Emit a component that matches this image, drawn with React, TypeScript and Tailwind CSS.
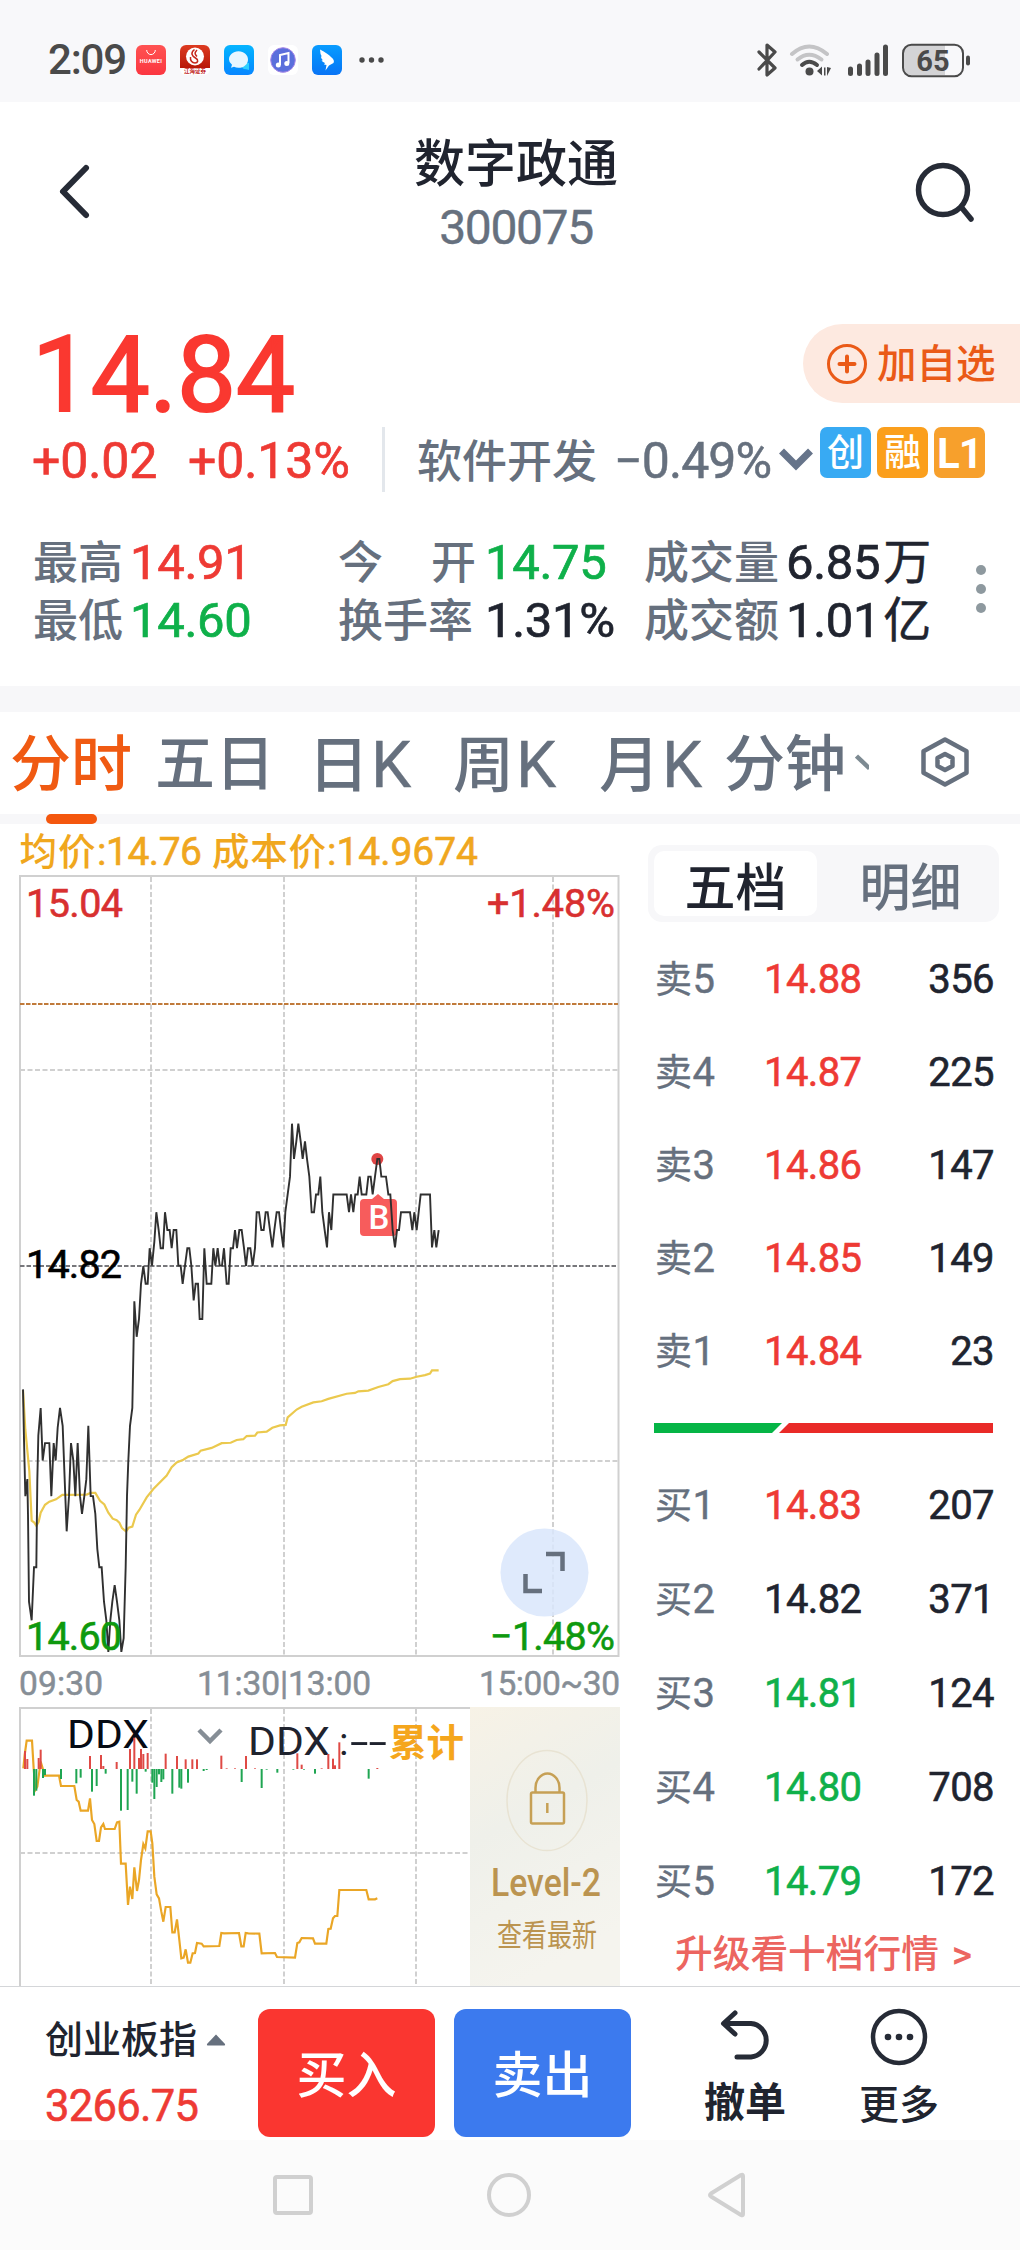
import React from "react";

const PRICE_LINE =
  "69,833 72,960 76,1103 82,1060 84,1150 87,1370 95,1417 102,1283 109,1283 112,1060 115,950 122,880 128,1013 135,969 148,969 154,1103 161,969 167,1013 173,930 180,880 188,925 194,1060 200,1192 207,1103 213,969 220,1013 226,1103 233,969 240,1103 246,1148 253,1103 259,1060 265,925 272,1103 279,1103 286,1148 292,1237 298,1283 305,1283 312,1370 319,1417 325,1497 331,1417 337,1370 344,1328 351,1370 358,1417 364,1497 371,1462 377,1283 381,1103 385,1013 390,925 397,880 400,750 403,610 410,700 417,655 423,566 430,521 437,566 443,566 449,476 456,520 463,460 469,385 476,430 482,476 489,476 495,385 502,430 509,430 515,476 521,430 529,430 535,520 542,520 548,566 555,520 562,476 568,476 574,520 581,608 587,566 594,566 599,655 607,655 613,476 620,566 634,566 640,476 646,520 653,476 659,520 666,520 672,476 680,566 686,566 692,476 699,476 705,430 711,476 718,430 725,430 732,476 738,521 744,476 751,476 758,521 765,476 770,385 777,385 784,430 791,430 797,385 803,385 810,430 817,474 823,430 830,385 837,385 843,430 850,474 856,385 863,340 870,295 876,161 882,250 889,206 895,161 902,206 908,250 915,206 921,250 928,295 935,385 942,385 948,340 955,340 961,295 967,385 974,430 981,474 987,385 994,430 1000,340 1040,340 1047,385 1053,340 1060,385 1066,340 1073,340 1079,295 1085,340 1099,340 1105,295 1112,295 1118,340 1125,295 1132,250 1138,250 1144,295 1158,295 1165,340 1171,340 1178,430 1185,474 1191,430 1197,430 1203,385 1230,385 1237,430 1243,385 1250,430 1256,385 1262,340 1290,340 1296,474 1303,430 1309,474 1316,430";

const AVERAGE_LINE =
  "69,835 76,935 88,1040 95,1165 103,1170 109,1178 116,1168 122,1145 135,1125 148,1117 168,1111 187,1100 260,1099 272,1095 286,1095 300,1115 313,1124 325,1145 338,1160 350,1164 358,1170 366,1184 378,1192 386,1183 397,1180 408,1150 418,1138 440,1106 460,1085 500,1051 515,1030 530,1018 550,1011 565,1003 595,995 602,988 635,981 665,969 692,968 710,961 730,959 740,951 765,950 772,942 800,940 817,930 840,924 857,923 863,904 890,884 905,877 940,866 965,863 985,857 1040,844 1065,842 1075,838 1105,836 1135,827 1165,820 1178,812 1200,807 1230,806 1250,801 1275,797 1290,793 1296,785 1316,785";

const DDX_LINE =
  "70,235 74,195 80,152 96,152 101,235 106,300 112,290 118,245 122,215 128,235 134,257 177,257 183,288 223,288 230,330 236,335 242,362 264,362 270,325 276,390 283,402 290,453 297,453 303,412 310,402 315,417 344,417 351,397 358,395 363,521 377,521 384,645 390,590 397,627 403,532 411,603 417,570 423,510 430,462 436,475 443,424 452,424 457,460 463,560 470,613 477,625 484,665 490,695 497,651 511,651 517,727 524,727 531,688 538,750 544,805 551,803 557,778 564,818 571,818 578,790 585,789 591,759 605,761 611,769 658,768 664,729 672,730 717,729 724,769 731,769 737,729 745,730 778,731 785,790 825,789 831,801 885,803 892,759 898,757 905,744 939,745 945,761 979,761 985,717 992,716 999,685 1005,678 1012,678 1018,600 1099,600 1106,628 1125,628 1132,625";

const RED_BARS: [number, number][] = [
  [75, 183], [82, 207], [116, 204], [122, 179], [270, 198], [303, 195], [310, 228], [350, 216], [390, 177],
  [403, 143], [417, 204], [423, 177], [430, 192], [443, 189], [497, 191], [531, 198], [557, 208], [577, 208],
  [591, 208], [664, 197], [738, 198], [892, 190], [905, 224], [985, 192], [999, 206], [1005, 226], [1018, 157],
  [680, 235], [705, 235], [765, 235], [965, 235], [1132, 234],
];

const GREEN_BARS: [number, number][] = [
  [102, 317], [109, 302], [129, 264], [135, 255], [183, 267], [229, 280], [242, 263], [276, 305], [290, 288],
  [317, 251], [363, 362], [383, 360], [397, 275], [410, 311], [437, 245], [457, 278], [463, 327], [470, 291],
  [477, 253], [484, 276], [490, 268], [517, 311], [538, 293], [544, 296], [564, 278], [611, 243], [620, 240],
  [725, 276], [785, 294], [800, 239], [832, 248], [880, 239], [912, 239], [945, 251], [1106, 266],
];

const SELLS = [
  ["卖5", "14.88", "356"],
  ["卖4", "14.87", "225"],
  ["卖3", "14.86", "147"],
  ["卖2", "14.85", "149"],
  ["卖1", "14.84", "23"],
];

const BUYS = [
  ["买1", "14.83", "207", "text-[#ee3a34]"],
  ["买2", "14.82", "371", "text-[#20242f]"],
  ["买3", "14.81", "124", "text-[#0fb04a]"],
  ["买4", "14.80", "708", "text-[#0fb04a]"],
  ["买5", "14.79", "172", "text-[#0fb04a]"],
];

function StatusBar() {
  return (
    <div className="flex h-[102px] items-center bg-[#f8f8fa] pr-[50px] pl-[48px] pt-[18px] text-[#4a4a4a]">
      <span className="w-[88px] text-[42px] leading-none tracking-[-1.200px]">2:09</span>
      <div className="flex gap-[14px]">
        <div className="flex size-[30px] flex-col items-center rounded-[6px] bg-gradient-to-b from-[#ff5252] to-[#fb3540] pt-[5px]">
          <svg width="10" height="6" viewBox="0 0 10 6" fill="none" stroke="#fff" strokeWidth="1">
            <path d="M.7 0a4.3 4.6 0 0 0 8.6 0" />
          </svg>
          <span className="mt-[3px] text-[5.5px] leading-none font-bold tracking-[0.3px] text-white">HUAWEI</span>
        </div>
        <div className="flex size-[30px] flex-col items-center overflow-hidden rounded-[6px] bg-white">
          <div className="flex h-[23px] w-full justify-center bg-gradient-to-b from-[#dd3a20] to-[#b81708] pt-[2px]">
            <svg width="20" height="20" viewBox="0 0 20 20">
              <circle cx="10" cy="9.5" r="9" fill="#fff" />
              <path d="M9.500 2.500C5 6 7 9 10.500 11s2.500 5-.5 5-5-2.500-4.500-6M12 3c-3 3-2 4.500 0 6.500" fill="none" stroke="#c6281c" strokeWidth="1.500" />
            </svg>
          </div>
          <span className="text-[5.5px] leading-[7px] font-bold text-[#c02020]">江海证券</span>
        </div>
        <div className="size-[30px] rounded-[6px] bg-gradient-to-b from-[#08b5ff] to-[#0a86ff]">
          <svg width="30" height="30" viewBox="0 0 30 30">
            <path d="M18 18h7v7q-3-1-5-1-3-1-2-6z" fill="#2fd0ff" />
            <path d="M14.5 6.200c5.500 0 9.500 3.700 9.500 8.300s-4 8.300-9.500 8.300q-2.500 0-4.500-1l-3 1 1-3q-3-2-3-5.300c0-4.600 4-8.300 9.500-8.300z" fill="#e8f6ff" />
          </svg>
        </div>
        <div className="size-[30px] rounded-[6px] bg-white">
          <svg width="30" height="30" viewBox="0 0 30 30">
            <circle cx="15" cy="15" r="12.300" fill="#5b6fdc" stroke="#a887e8" strokeWidth="1" />
            <path d="M12 20V10l8.500-2v10" fill="none" stroke="#fff" strokeWidth="2" />
            <circle cx="10.300" cy="20" r="2.500" fill="#fff" />
            <circle cx="18.800" cy="18.500" r="2.500" fill="#fff" />
          </svg>
        </div>
        <div className="size-[30px] rounded-[6px] bg-gradient-to-b from-[#0a9cff] to-[#0a74f5]">
          <svg width="30" height="30" viewBox="0 0 30 30">
            <path d="M8 4.500q8 4 11 7.500 4 3 2.500 6l-4.500 2.500-3.500 5 1-5.500-2.500-.5 1-1.500q-3-1-3.500-3l1.500.5q-2.500-2-2-4.500l1 1q-2-3-2-7.500z" fill="#fff" />
          </svg>
        </div>
      </div>
      <svg className="ml-[16px]" width="28" height="8" viewBox="0 0 28 8" fill="#4a4a4a">
        <circle cx="4" cy="4" r="2.700" />
        <circle cx="13.500" cy="4" r="2.700" />
        <circle cx="23" cy="4" r="2.700" />
      </svg>
      <div className="flex-1" />
      <svg width="214" height="36" viewBox="0 0 214 36" fill="none" stroke="#4a4a4a">
        <path d="M3 10l16 16-8 7V3l8 7L3 27" strokeWidth="3.200" strokeLinecap="round" strokeLinejoin="round" />
        <g stroke="#c4c4c6" strokeWidth="4" strokeLinecap="round">
          <path d="M36 12Q53 -3 71 12" />
          <path d="M41.500 17.500Q53 8 65.500 17.500" />
        </g>
        <path d="M46 23Q53 16.500 61 23" strokeWidth="4" strokeLinecap="round" />
        <circle cx="53.500" cy="29.500" r="4" fill="#4a4a4a" stroke="none" />
        <path d="M66 24.500v9l-5-4.500zM68 25.500h1.500v8H68zM71 25v9l4-8z" fill="#4a4a4a" stroke="none" />
        <path d="M94.500 27v4.500M103.500 24v7.500M112 20v11.500M121 13v18.500M129.500 5v26.500" strokeWidth="5" strokeLinecap="round" />
        <path d="M155 3h34v30h-34a8 8 0 0 1-8-8V11a8 8 0 0 1 8-8z" fill="#d3d3d5" stroke="none" />
        <rect x="147" y="2.800" width="60" height="31.500" rx="8.500" strokeWidth="2" />
        <path d="M212 15.500v6" strokeWidth="4" strokeLinecap="round" />
        <text x="177" y="28.500" fill="#4a4a4a" stroke="none" fontSize="29" fontWeight="700" textAnchor="middle">65</text>
      </svg>
    </div>
  );
}

function Header() {
  return (
    <div className="flex h-[198px] items-start">
      <svg className="mt-[60px] ml-[56px]" width="76" height="58" viewBox="0 0 76 58" fill="none" stroke="#262b36" strokeWidth="6" strokeLinecap="round" strokeLinejoin="round">
        <path d="M30 6 7 29.500l23 23.500" />
      </svg>
      <div className="flex flex-1 flex-col items-center text-center">
        <span className="mt-[37px] text-[51px] leading-none text-[#20242f]">数字政通</span>
        <span className="mt-[14px] text-[48px] leading-none font-normal tracking-[-1.400px] text-[#66707e] [-webkit-text-stroke:0.4px]">300075</span>
      </div>
      <svg className="mt-[56px] mr-[39px] ml-[9px]" width="72" height="66" viewBox="0 0 72 66" fill="none" stroke="#262b36" strokeLinecap="round">
        <circle cx="34" cy="32" r="24.500" strokeWidth="5.500" />
        <path d="M53 50 62 61" strokeWidth="5.500" />
      </svg>
    </div>
  );
}

function Stats() {
  const label = "text-[45px] leading-[57px] text-[#66707e]";
  const val = "text-[49px] leading-[57px] font-normal tracking-[-0.300px] [-webkit-text-stroke:0.7px] ";
  const unit = "ml-[3px] text-[48px] [-webkit-text-stroke:0.5px]";
  return (
    <div className="mt-[42px] flex pl-[33px]">
      <div className="grid grid-cols-[97px_208px_147px_159px_142px_190px] items-baseline whitespace-nowrap">
        <span className={label}>最高</span>
        <span className={val + "text-[#ee3a34]"}>14.91</span>
        <span className={label}>今<span className="inline-block w-[48px]" />开</span>
        <span className={val + "text-[#0fb04a]"}>14.75</span>
        <span className={label}>成交量</span>
        <span className={val + "text-[#20242f]"}>6.85<span className={unit}>万</span></span>
        <span className={label}>最低</span>
        <span className={val + "text-[#0fb04a]"}>14.60</span>
        <span className={label}>换手率</span>
        <span className={val + "text-[#20242f]"}>1.31%</span>
        <span className={label}>成交额</span>
        <span className={val + "text-[#20242f]"}>1.01<span className={unit}>亿</span></span>
      </div>
      <div className="mt-[31px] flex flex-col gap-[9px]">
        <i className="size-[10px] rounded-full bg-[#8e999f]" />
        <i className="size-[10px] rounded-full bg-[#8e999f]" />
        <i className="size-[10px] rounded-full bg-[#8e999f]" />
      </div>
    </div>
  );
}

function Quote() {
  return (
    <div className="h-[386px]">
      <div className="flex h-[127px] justify-between">
        <span className="mt-[23px] pl-[32px] text-[105px] leading-none font-normal tracking-[-0.200px] text-[#fa3830] [-webkit-text-stroke:2px]">14.84</span>
        <div className="mt-[24px] flex h-[79px] w-[217px] items-center rounded-l-full bg-[#fde9e0] pl-[23px] text-[#ea5a17]">
          <svg width="42" height="42" viewBox="0 0 42 42" fill="none" stroke="#ea5a17">
            <circle cx="21" cy="21" r="18.500" strokeWidth="3" />
            <path d="M21 13.500v15M13.500 21h15" strokeWidth="4" strokeLinecap="round" />
          </svg>
          <span className="ml-[9px] pt-[2px] text-[39.500px] leading-none">加自选</span>
        </div>
      </div>
      <div className="flex h-[65px] items-center whitespace-nowrap">
        <div className="flex w-[382px] pt-[3px] pl-[32px] text-[50px] leading-none font-normal tracking-[-0.100px] text-[#ee3a34] [-webkit-text-stroke:0.7px]">
          <span className="w-[156px]">+0.02</span>
          <span>+0.13%</span>
        </div>
        <i className="h-[65px] w-[3px] bg-[#e3e7ec]" />
        <span className="ml-[32px] w-[197px] pt-[5px] text-[45px] leading-none text-[#66707e]">软件开发</span>
        <span className="flex w-[165px] items-center pt-[3px] text-[50px] leading-none font-normal tracking-[-0.900px] text-[#66707e] [-webkit-text-stroke:0.5px]">
          −0.49%
        </span>
        <svg width="34" height="26" viewBox="0 0 34 26" fill="none" stroke="#66748a" strokeWidth="7">
          <path d="M2.500 4 17 18.500 31.500 4" />
        </svg>
        <div className="ml-[7px] flex gap-[6px] self-start text-[37px] text-white">
          <span className="flex size-[51px] items-center justify-center rounded-[7px] bg-[#38aaf3] pt-[2px] leading-none">创</span>
          <span className="flex size-[51px] items-center justify-center rounded-[7px] bg-[#fb9f1c] pt-[2px] leading-none">融</span>
          <span className="flex size-[51px] items-center justify-center rounded-[7px] bg-[#f7a02c] pt-[2px] text-[42px] leading-none font-bold tracking-[-1px]">L1</span>
        </div>
      </div>
      <Stats />
    </div>
  );
}

function KTab({ name }: { name: string }) {
  return (
    <span className="pt-[5px]">
      {name}
      <span className="ml-[2px] inline-block text-[64px] leading-none font-normal [-webkit-text-stroke:0.4px]">K</span>
    </span>
  );
}

function Tabs() {
  return (
    <div>
      <div className="h-[26px] bg-[#f7f7f9]" />
      <div className="grid h-[102px] grid-cols-[145px_153px_145px_146px_125px_131px_65px_60px] items-center pl-[10px] text-[61px] leading-none whitespace-nowrap text-[#66707e]">
        <span className="pt-[4px] text-[#f05a12]">分时</span>
        <span className="pt-[4px] text-[60px]">五日</span>
        <KTab name="日" />
        <KTab name="周" />
        <KTab name="月" />
        <span className="pt-[4px]">分钟</span>
        <svg width="14" height="18" viewBox="0 0 14 18" fill="none" stroke="#7d8a92" strokeWidth="4.500">
          <path d="M1.500 2 14.500 14.500" />
        </svg>
        <svg width="52" height="54" viewBox="0 0 52 54" fill="none" stroke="#66707e" strokeWidth="4.500" strokeLinejoin="round">
          <path d="M25 3.500 46.500 15.200v21.600L25 48.500 3.500 36.800V15.200z" />
          <path d="M25 18 32.500 22v8L25 34l-7.500-4v-8z" />
        </svg>
      </div>
      <div className="h-[10px] bg-[#f7f7f9] pl-[46px]">
        <div className="h-[10px] w-[51px] rounded-full bg-[#f4570e]" />
      </div>
    </div>
  );
}

function Charts() {
  return (
    <svg width="640" height="1162" viewBox="0 824 640 1162" fill="none" className="block">
      <defs>
        <linearGradient id="gold" x1="0" y1="0" x2=".3" y2="1">
          <stop offset="0" stopColor="#f7f2e6" />
          <stop offset=".45" stopColor="#eff0ea" />
          <stop offset="1" stopColor="#f5f4ee" />
        </linearGradient>
      </defs>

      <g fill="#f0a71e" fontSize="37.500">
        <text x="19.500" y="865" textLength="76">均价</text>
        <text x="212" y="865" textLength="114">成本价</text>
        <g fontSize="39" fontWeight="400" stroke="#f0a71e" strokeWidth=".6">
          <text x="97" y="865" textLength="105">:14.76</text>
          <text x="327" y="865" textLength="151">:14.9674</text>
        </g>
      </g>

      <g stroke="#d0d0d0" strokeWidth="2">
        <rect x="20" y="876" width="598.500" height="780" />
        <g strokeDasharray="5 2.500">
          <path d="M151 877V1656M284 877V1656M416 877V1656M553 877V1656" />
          <path d="M20 1070H618M20 1461H618" />
        </g>
      </g>
      <path d="M20 1004H618" stroke="#c07a3a" strokeWidth="2" strokeDasharray="4.500 1.500" />
      <path d="M20 1266H618" stroke="#77777b" strokeWidth="2" strokeDasharray="4.500 2" />

      <g fontSize="39.500" fontWeight="400" strokeWidth=".6">
        <text x="26" y="917" fill="#d83030" stroke="#d83030" textLength="97">15.04</text>
        <text x="487" y="917" fill="#d83030" stroke="#d83030" textLength="128">+1.48%</text>
        <text x="26" y="1278" fill="#000" stroke="#000" textLength="96">14.82</text>
      </g>

      <path d="M360 1203q0-4 4-4h8l6-5 6 5h9q4 0 4 4v29q0 4-4 4h-29q-4 0-4-4z" fill="#f75c5c" />
      <text x="379" y="1228.500" fill="#fff" fontSize="33" textAnchor="middle">B</text>
      <circle cx="377.300" cy="1159" r="6" fill="#e04545" />

      <g transform="translate(0 1060) scale(.33333 .39541)">
        <polyline points={AVERAGE_LINE} stroke="#ebc94e" strokeWidth="2.200" vectorEffect="non-scaling-stroke" />
        <polyline points={PRICE_LINE} stroke="#303030" strokeWidth="1.900" vectorEffect="non-scaling-stroke" />
      </g>

      <circle cx="544.500" cy="1572.500" r="44" fill="#d9e6fb" fillOpacity=".85" />
      <path d="M546 1554h16.500v17M525.500 1574v17H542" stroke="#66707e" strokeWidth="4.500" />

      <g fontSize="39.500" fontWeight="400" fill="#0e990e" stroke="#0e990e" strokeWidth=".6">
        <text x="26" y="1650" textLength="96">14.60</text>
        <text x="490" y="1650" textLength="125">−1.48%</text>
      </g>

      <g fontSize="33.500" fontWeight="400" fill="#868e96" stroke="#868e96" strokeWidth=".5">
        <text x="19" y="1695" textLength="84">09:30</text>
        <text x="197" y="1695" textLength="174">11:30|13:00</text>
        <text x="479" y="1695" textLength="141">15:00~30</text>
      </g>

      <g stroke="#d0d0d0" strokeWidth="2">
        <path d="M470 1708H20V1986" />
        <g strokeDasharray="5 2.500">
          <path d="M151 1709V1986M284 1709V1986M416 1709V1986M20 1853H470" />
        </g>
      </g>
      <g fontSize="39.500" fill="#1f232e" fontWeight="400">
        <text x="67" y="1748" fill="#060b14" textLength="82" lengthAdjust="spacingAndGlyphs">DDX</text>
        <text x="248" y="1755" textLength="82" lengthAdjust="spacingAndGlyphs">DDX</text>
        <text x="339" y="1755">:</text>
        <text x="350" y="1755" textLength="37" lengthAdjust="spacingAndGlyphs">--</text>
        <text x="389" y="1756" fontSize="37.500" fontWeight="700" fill="#f5a61c">累计</text>
      </g>
      <path d="M199 1730 210 1741 221 1730" stroke="#868e96" strokeWidth="4.500" />
      <g transform="translate(0 1690) scale(.33333)">
        <polyline points={DDX_LINE} stroke="#eaa626" strokeWidth="6.500" />
        {RED_BARS.map(([x, y]) => (
          <rect key={x} x={x - 3} y={y} width="6" height={237 - y} fill="#df4a45" />
        ))}
        {GREEN_BARS.map(([x, y]) => (
          <rect key={x} x={x - 3} y="237" width="6" height={y - 237} fill="#1fa552" />
        ))}
      </g>

      <rect x="470" y="1707" width="150" height="279" fill="url(#gold)" />
      <ellipse cx="547" cy="1800.500" rx="40" ry="50" stroke="#e8e3d3" strokeWidth="1.500" />
      <g stroke="#c6a055" strokeWidth="2.500">
        <rect x="531" y="1792.500" width="33" height="31" rx="1.500" />
        <path d="M535.500 1792v-4a12 14.500 0 0 1 24 0v4" />
        <path d="M547.300 1803v10" />
      </g>
      <g fill="#bb9450">
        <text x="491" y="1896" fontSize="39" textLength="110" lengthAdjust="spacingAndGlyphs">Level-2</text>
        <text x="497" y="1946" fontSize="31" fontWeight="400" textLength="100" lengthAdjust="spacingAndGlyphs">查看最新</text>
      </g>
    </svg>
  );
}

function BookRow({ row, color }: { row: string[]; color: string }) {
  return (
    <div className="grid grid-cols-[109px_110px_120px] items-baseline text-[40px] leading-none font-normal tracking-[-0.600px] text-[#20242f] [-webkit-text-stroke:0.6px]">
      <span className="text-[#66707e] [-webkit-text-stroke:0.4px]">
        <span className="mr-[1px] text-[37px]">{row[0][0]}</span>
        {row[0][1]}
      </span>
      <span className={color}>{row[1]}</span>
      <span className="text-right">{row[2]}</span>
    </div>
  );
}

function OrderBook() {
  return (
    <div className="flex w-[380px] flex-col pl-[8px]">
      <div className="mt-[21px] flex h-[77px] w-[351px] items-center rounded-[14px] bg-[#f7f7f9] p-[6px] text-[51px] leading-none">
        <div className="flex h-[65px] w-[163px] items-center justify-center rounded-[10px] bg-white pt-[10px] text-[#20242f]">五档</div>
        <div className="flex flex-1 items-center justify-center pt-[10px] pl-[11px] text-[#66707e]">明细</div>
      </div>
      <div className="mt-[38px] ml-[7px] flex flex-col gap-[53px]">
        {SELLS.map((row) => (
          <BookRow key={row[0]} row={row} color="text-[#ee3a34]" />
        ))}
      </div>
      <svg className="mt-[51px] ml-[6px] shrink-0" width="340" height="10" viewBox="0 0 340 10">
        <path d="M0 0h128l-10 10H0z" fill="#05b546" />
        <path d="M135 0h204v10H125z" fill="#e92a28" />
      </svg>
      <div className="mt-[53px] ml-[7px] flex flex-col gap-[54px]">
        {BUYS.map((row) => (
          <BookRow key={row[0]} row={row} color={row[3]} />
        ))}
      </div>
      <div className="mt-[34px] ml-[27px] flex text-[37.700px] leading-none text-[#ec6560]">
        升级看十档行情<span className="ml-[13px] text-[39px]">&gt;</span>
      </div>
    </div>
  );
}

function ActionBar() {
  return (
    <div className="flex h-[154px] items-start border-t border-[#d4d6d9] bg-white text-[#20242f]">
      <div className="ml-[45px] w-[213px] pt-[34px]">
        <div className="flex items-center text-[38px] leading-none">
          创业板指
          <svg className="ml-[9px]" width="20" height="12" viewBox="0 0 20 12" fill="#66707e">
            <path d="M10 .500 19 10q.6 1.500-1 1.500H2Q.4 11.500 1 10z" />
          </svg>
        </div>
        <div className="mt-[26px] text-[43.500px] leading-none font-normal tracking-[-0.700px] text-[#ee3a34] [-webkit-text-stroke:0.6px]">3266.75</div>
      </div>
      <div className="mt-[22px] flex h-[128px] w-[177px] items-center justify-center rounded-[12px] bg-[#fa3630] pt-[5px] text-[50px] leading-none text-white">买入</div>
      <div className="mt-[22px] ml-[19px] flex h-[128px] w-[177px] items-center justify-center rounded-[12px] bg-[#3c7aee] pt-[5px] text-[50px] leading-none text-white">卖出</div>
      <div className="ml-[54px] flex w-[120px] flex-col items-center pt-[22px] text-[41px] leading-none font-bold">
        <svg width="52" height="52" viewBox="0 0 52 52" fill="none" stroke="#262b36" strokeWidth="5" strokeLinecap="round" strokeLinejoin="round">
          <path d="M16 4 4.500 14.500 16 25M5 14.500h27a16.500 16.800 0 0 1 0 33.500H18" />
        </svg>
        <span className="mt-[22px]">撤单</span>
      </div>
      <div className="ml-[34px] flex w-[120px] flex-col items-center pt-[21px] text-[40px] leading-none">
        <svg width="58" height="58" viewBox="0 0 58 58" fill="#262b36">
          <circle cx="29" cy="29" r="26" fill="none" stroke="#262b36" strokeWidth="4.500" />
          <circle cx="18" cy="29" r="3.300" />
          <circle cx="29" cy="29" r="3.300" />
          <circle cx="40" cy="29" r="3.300" />
        </svg>
        <span className="mt-[20px]">更多</span>
      </div>
    </div>
  );
}

function NavBar() {
  return (
    <div className="flex h-[110px] items-center bg-[#fbfbfb] pl-[273px]">
      <i className="size-[40px] rounded-[4px] border-[4px] border-[#d0d0d0]" />
      <i className="ml-[174px] size-[44px] rounded-full border-[4px] border-[#d0d0d0]" />
      <svg className="ml-[176px]" width="40" height="46" viewBox="0 0 40 46" fill="none" stroke="#d0d0d0" strokeWidth="4" strokeLinejoin="round">
        <path d="M36 4q0-2-2-1L4 21.500q-2 1.500 0 3L34 43q2 1 2-1z" />
      </svg>
    </div>
  );
}

export default function App() {
  return (
    <div className="w-[1020px] bg-white font-['Roboto','Noto_Sans_CJK_SC',sans-serif] font-medium">
      <StatusBar />
      <Header />
      <Quote />
      <Tabs />
      <div className="flex h-[1162px]">
        <Charts />
        <OrderBook />
      </div>
      <ActionBar />
      <NavBar />
    </div>
  );
}
